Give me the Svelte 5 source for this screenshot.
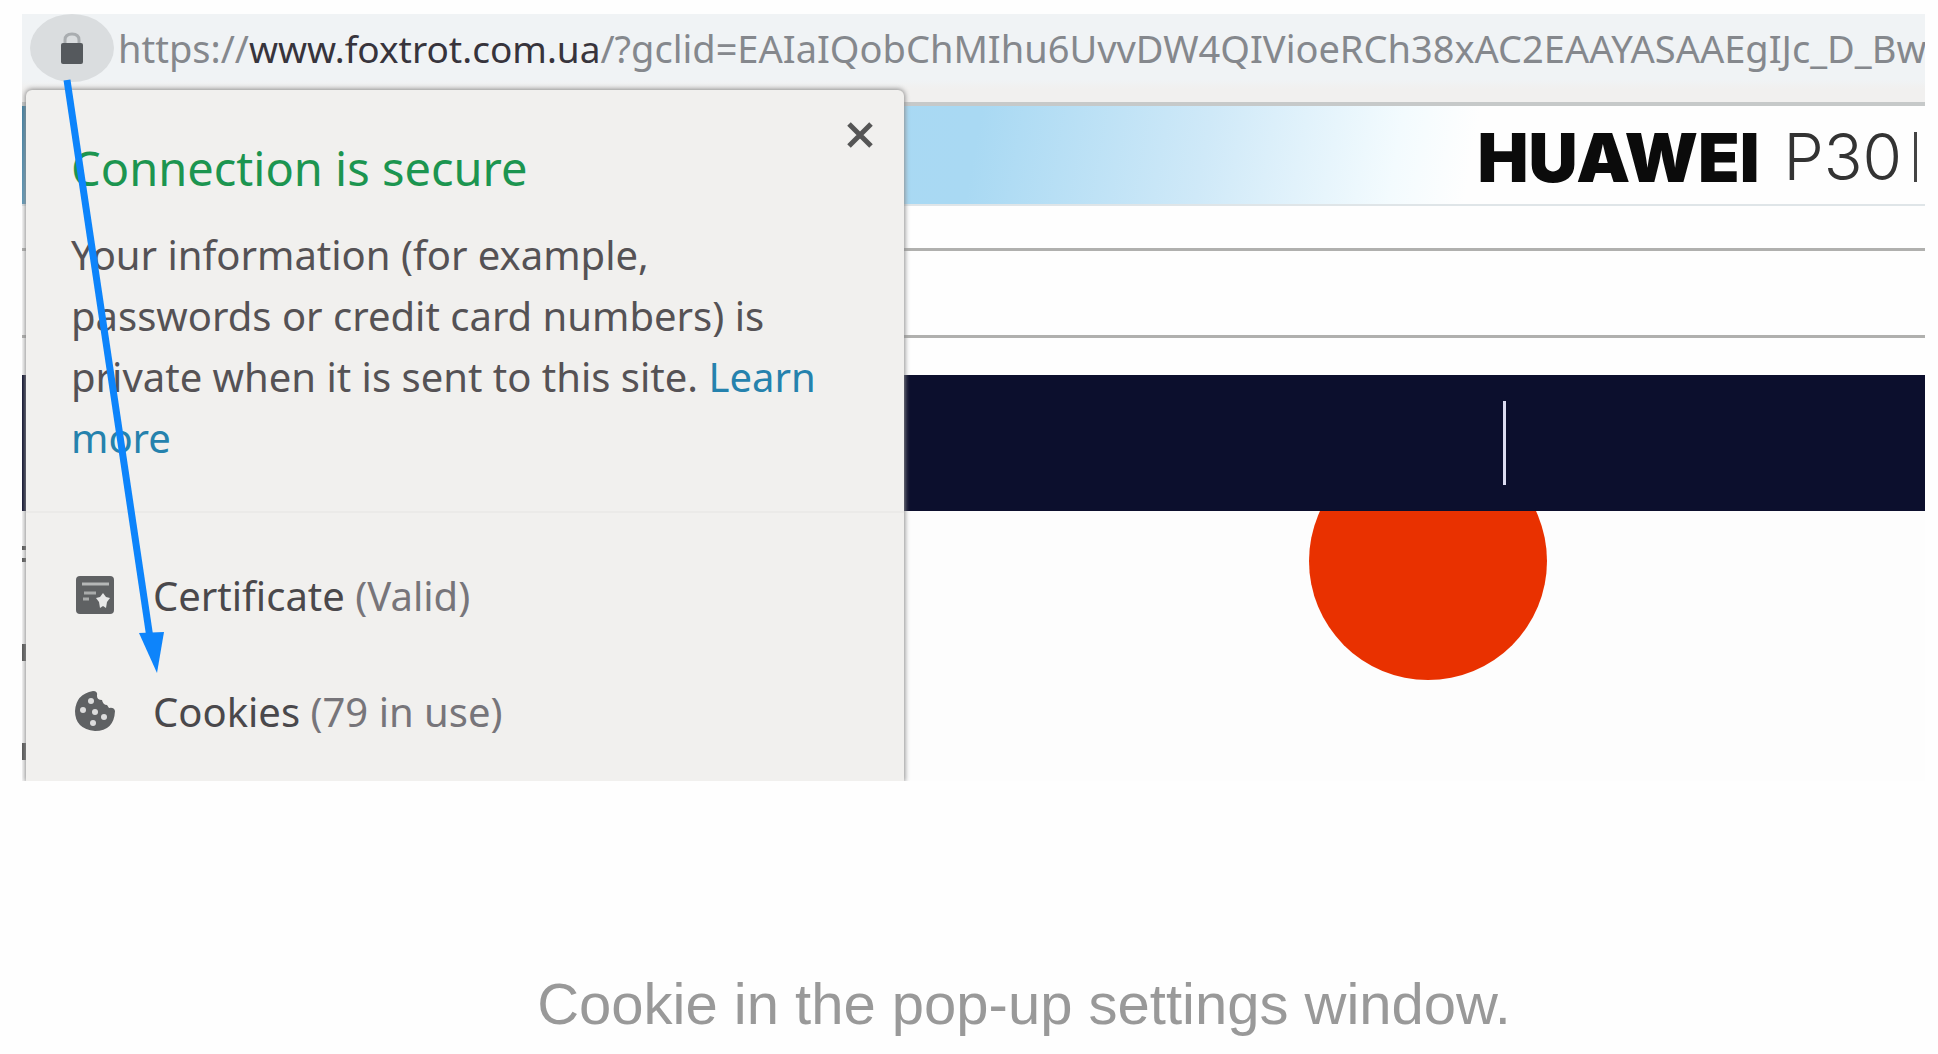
<script>
  const url = {
    scheme: 'https://',
    host: 'www.foxtrot.com.ua',
    path: '/?gclid=EAIaIQobChMIhu6UvvDW4QIVioeRCh38xAC2EAAYASAAEgIJc_D_Bw'
  };
  let open = $state(true);
</script>

<figure>
  <div class="browser">
    <header class="address">
      <button class="lock" aria-label="View site information" onclick={() => (open = !open)}>
        <svg viewBox="0 0 24 34" aria-hidden="true">
          <path d="M5 13V9q0-6 7-6t7 6v4" fill="none" stroke="#a9adb0" stroke-width="3" />
          <rect x="1" y="12" width="22" height="21" rx="2" fill="#55595d" />
        </svg>
      </button>
      <div class="url"><span>{url.scheme}</span><span class="host">{url.host}</span><span>{url.path}</span></div>
    </header>

    <main class="page">
      <div class="banner">
        <strong>HUAWEI</strong>
        <span class="model">P30</span>
        <i class="bar"></i>
      </div>
      <div class="strip top"></div>
      <div class="strip search"></div>
      <div class="strip gap"></div>
      <nav class="menu" aria-label="Categories"><i></i></nav>
      <div class="content">
        <svg class="dot" viewBox="0 0 240 170" aria-hidden="true">
          <circle cx="120" cy="50" r="119" fill="#e93100" />
        </svg>
      </div>
    </main>

    {#if open}
      <section class="popup" aria-label="Site information">
        <div class="summary">
          <div class="heading">
            <h1>Connection is secure</h1>
            <button class="close" aria-label="Close" onclick={() => (open = false)}>
              <svg viewBox="0 0 28 28" aria-hidden="true">
                <path d="M3 3l22 22M25 3L3 25" stroke="#555" stroke-width="5" />
              </svg>
            </button>
          </div>
          <p>
            Your information (for example,<br />passwords or credit card numbers) is<br />private when it is sent to this
            site. <a href="#learn">Learn<br />more</a>
          </p>
        </div>
        <div class="items">
          <button>
            <svg viewBox="0 0 40 40" aria-hidden="true">
              <rect x="1" y="1" width="38" height="38" rx="4" fill="#5f6163" />
              <path d="M7 9h27" stroke="#b5b7b7" stroke-width="3" />
              <path d="M9 18h12M8 24h6" stroke="#a9abab" stroke-width="3" />
              <path d="M28 18l3 4 4 1-3 4-1 6-3-2-3 2-1-6-3-4 4-1z" fill="#e8e8e8" />
            </svg>
            <span>Certificate <em>(Valid)</em></span>
          </button>
          <button>
            <svg viewBox="0 0 40 40" aria-hidden="true">
              <path
                d="M18 0q5 0 4 5 0 4 5 4 1 5 5 5l2 3q5-1 6 3-1 20-20 20Q0 38 0 20 1 3 18 0z"
                fill="#5f6163"
              />
              <g fill="#dcdcdc">
                <circle cx="16" cy="10" r="3" />
                <circle cx="8" cy="19" r="3" />
                <circle cx="20" cy="21" r="3" />
                <circle cx="29" cy="26" r="3" />
                <circle cx="18" cy="32" r="3" />
              </g>
            </svg>
            <span>Cookies <em>(79 in use)</em></span>
          </button>
        </div>
      </section>
    {/if}

    <svg class="arrow" viewBox="0 0 110 600" aria-hidden="true">
      <path d="M10 2L93 560" fill="none" stroke="#0d84fb" stroke-width="7" />
      <path d="M82 555l25-1-7 41z" fill="#0d84fb" />
    </svg>
  </div>
  <figcaption>Cookie in the pop-up settings window.</figcaption>
</figure>

<style>
  :global(body) {
    margin: 0;
    background: #fefefe;
  }
  figure {
    margin: 0;
    padding: 14px 13px 0 22px;
    font-family: 'Noto Sans', 'Open Sans', sans-serif;
  }
  button {
    border: 0;
    padding: 0;
    background: none;
    font: inherit;
    color: inherit;
    cursor: pointer;
  }
  .browser {
    position: relative;
    overflow: hidden;
  }
  .address {
    display: flex;
    align-items: flex-start;
    gap: 4px;
    height: 88px;
    padding-left: 8px;
    background: linear-gradient(#f0f3f5 75%, #f1f0ef 85%);
    border-bottom: 4px solid #c6c9c9;
  }
  .lock {
    flex: none;
    display: grid;
    place-items: center;
    width: 84px;
    height: 68px;
    border-radius: 50%;
    background: #dadddf;
  }
  .lock svg {
    width: 24px;
    height: 34px;
  }
  .url {
    flex: 1;
    min-width: 0;
    white-space: nowrap;
    font-size: 38px;
    line-height: 68px;
    color: #85888d;
  }
  .host {
    font-size: 37px;
    color: #37343c;
  }
  .banner {
    display: flex;
    align-items: center;
    justify-content: flex-end;
    box-sizing: border-box;
    height: 100px;
    padding: 4px 8px 0 0;
    border-bottom: 2px solid #dfe5e8;
    background: linear-gradient(100deg, #3a7ea3 0, #a5d9f6 3%, #a9d9f3 50%, #cfe9f8 62%, #f3fbfe 72%, #fefefe 76%);
    font-family: Inter, sans-serif;
    font-size: 68px;
    line-height: 94px;
    color: #0b0b0b;
  }
  strong {
    font-weight: 900;
  }
  .model {
    margin-left: 24px;
    font-size: 64px;
    font-weight: 300;
    color: #333;
  }
  .bar {
    width: 3px;
    height: 50px;
    margin-left: 12px;
    background: #444;
  }
  .strip {
    background: #fefefe;
    border-bottom: 3px solid #b0b0ae;
  }
  .top {
    height: 42px;
  }
  .search {
    height: 84px;
  }
  .gap {
    height: 37px;
    border: 0;
  }
  .menu {
    display: grid;
    grid-template-columns: calc(78% - 3px) 1fr;
    align-items: center;
    height: 136px;
    background: #0c0f2d;
  }
  .menu i {
    grid-column: 2;
    justify-self: start;
    width: 3px;
    height: 84px;
    background: #dcdcf0;
  }
  .content {
    height: 270px;
    background: #fdfdfd
      linear-gradient(
        transparent 35px,
        #555 35px 39px,
        transparent 39px 47px,
        #555 47px 51px,
        transparent 51px 133px,
        #555 133px 150px,
        transparent 150px 232px,
        #555 232px 249px,
        transparent 249px
      )
      left top / 4px 100% no-repeat;
  }
  .dot {
    display: block;
    width: 240px;
    height: 170px;
    margin-left: calc(74% - 122px);
  }
  .popup {
    position: absolute;
    top: 76px;
    bottom: 0;
    left: 4px;
    width: 878px;
    border-radius: 6px 6px 0 0;
    background: #f1f0ee;
    box-shadow: 0 0 5px 1px #8c8c8c;
  }
  .summary {
    padding: 22px 30px 43px 45px;
    border-bottom: 2px solid #ebeae8;
  }
  .heading {
    display: flex;
    justify-content: space-between;
    align-items: flex-start;
  }
  h1 {
    margin: 24px 0;
    font-size: 47px;
    line-height: 64px;
    font-weight: 400;
    color: #1c9550;
  }
  .close {
    margin-top: 9px;
  }
  .close svg {
    display: block;
    width: 28px;
    height: 28px;
  }
  p {
    margin: 0;
    font-size: 40px;
    line-height: 61px;
    color: #555255;
    white-space: nowrap;
  }
  a {
    color: #2582ad;
    text-decoration: none;
  }
  .items {
    display: flex;
    flex-direction: column;
    padding: 24px 0 0 49px;
  }
  .items button {
    display: flex;
    align-items: center;
    gap: 38px;
    height: 116px;
    text-align: left;
    font-size: 40px;
    color: #4a484b;
  }
  .items svg {
    width: 40px;
    height: 40px;
  }
  em {
    font-style: normal;
    color: #77757a;
  }
  .arrow {
    position: absolute;
    top: 64px;
    left: 35px;
    width: 110px;
    height: 600px;
    pointer-events: none;
  }
  figcaption {
    padding: 190px 0 16px 101px;
    text-align: center;
    font-family: 'Liberation Sans', sans-serif;
    font-size: 58px;
    line-height: 66px;
    color: #999;
  }
</style>
